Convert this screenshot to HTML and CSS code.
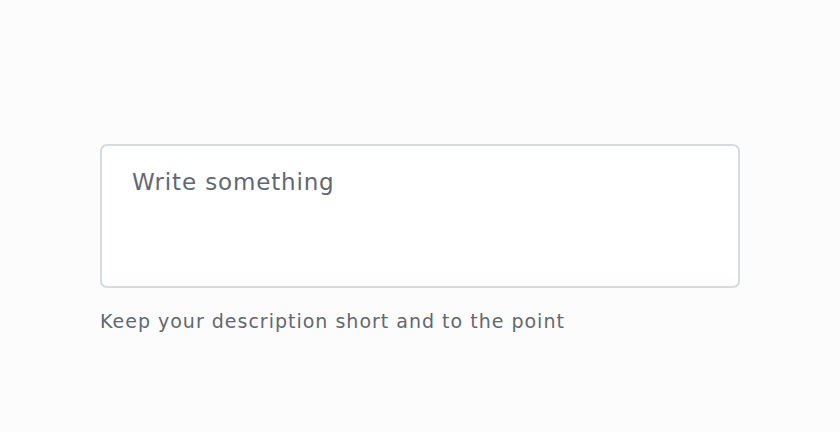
FILE: index.html
```html
<!DOCTYPE html>
<html>
<head>
<meta charset="utf-8">
<link rel="stylesheet" href="styles.css">
</head>
<body>
<main class="page">
  <div class="field">
    <textarea class="input" placeholder="Write something"></textarea>
    <p class="hint">Keep your description short and to the point</p>
  </div>
</main>
</body>
</html>
```

FILE: styles.css
```css
html, body {
  margin: 0;
  padding: 0;
  background: #fcfcfc;
}
.page {
  display: flex;
  justify-content: center;
  padding-top: 144px;
  font-family: "DejaVu Sans", sans-serif;
}
.field {
  width: 640px;
  display: flex;
  flex-direction: column;
}
.input {
  box-sizing: border-box;
  width: 640px;
  height: 144px;
  border: 2px solid #d6dbe1;
  border-radius: 7px;
  background: #fff;
  padding: 20px 30px;
  font-family: "DejaVu Sans", sans-serif;
  font-size: 23px;
  line-height: 32px;
  letter-spacing: 0.85px;
  color: #5f6873;
  resize: none;
  outline: none;
  margin: 0;
}
.input::placeholder {
  color: #5f6873;
  opacity: 1;
}
.hint {
  margin: 20px 0 0;
  font-size: 19px;
  line-height: 26px;
  letter-spacing: 1px;
  color: #5f6873;
}
```
